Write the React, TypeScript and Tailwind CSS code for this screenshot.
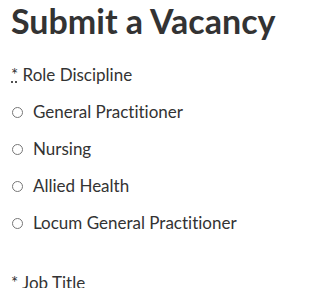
const options = [
  "General Practitioner",
  "Nursing",
  "Allied Health",
  "Locum General Practitioner",
];

export default function App() {
  return (
    <div className="w-[288px] h-[288px] overflow-hidden bg-white px-[11px] text-[#333333] font-['Lato',sans-serif] [font-variant-ligatures:none]">
      <h1 className="text-[34px] font-bold leading-[40px] pt-[1px] text-[#333333]">Submit a Vacancy</h1>

      <form className="mt-[24px]">
        <fieldset>
          <legend className="text-[17px] leading-[20px]">
            <abbr title="required" className="underline decoration-dotted">*</abbr> Role Discipline
          </legend>
          <div className="mt-[17px] flex flex-col gap-[17px]">
            {options.map((o) => (
              <label key={o} className="flex items-center gap-[10px] text-[17px] leading-[20px]">
                <input type="radio" name="discipline" className="w-[11px] h-[11px] m-0 ml-[1px] accent-gray-500" />
                <span>{o}</span>
              </label>
            ))}
          </div>
        </fieldset>

        <div className="mt-[40px] text-[17px] leading-[20px]">
          <abbr title="required" className="no-underline">*</abbr> Job Title
        </div>
      </form>
    </div>
  );
}
